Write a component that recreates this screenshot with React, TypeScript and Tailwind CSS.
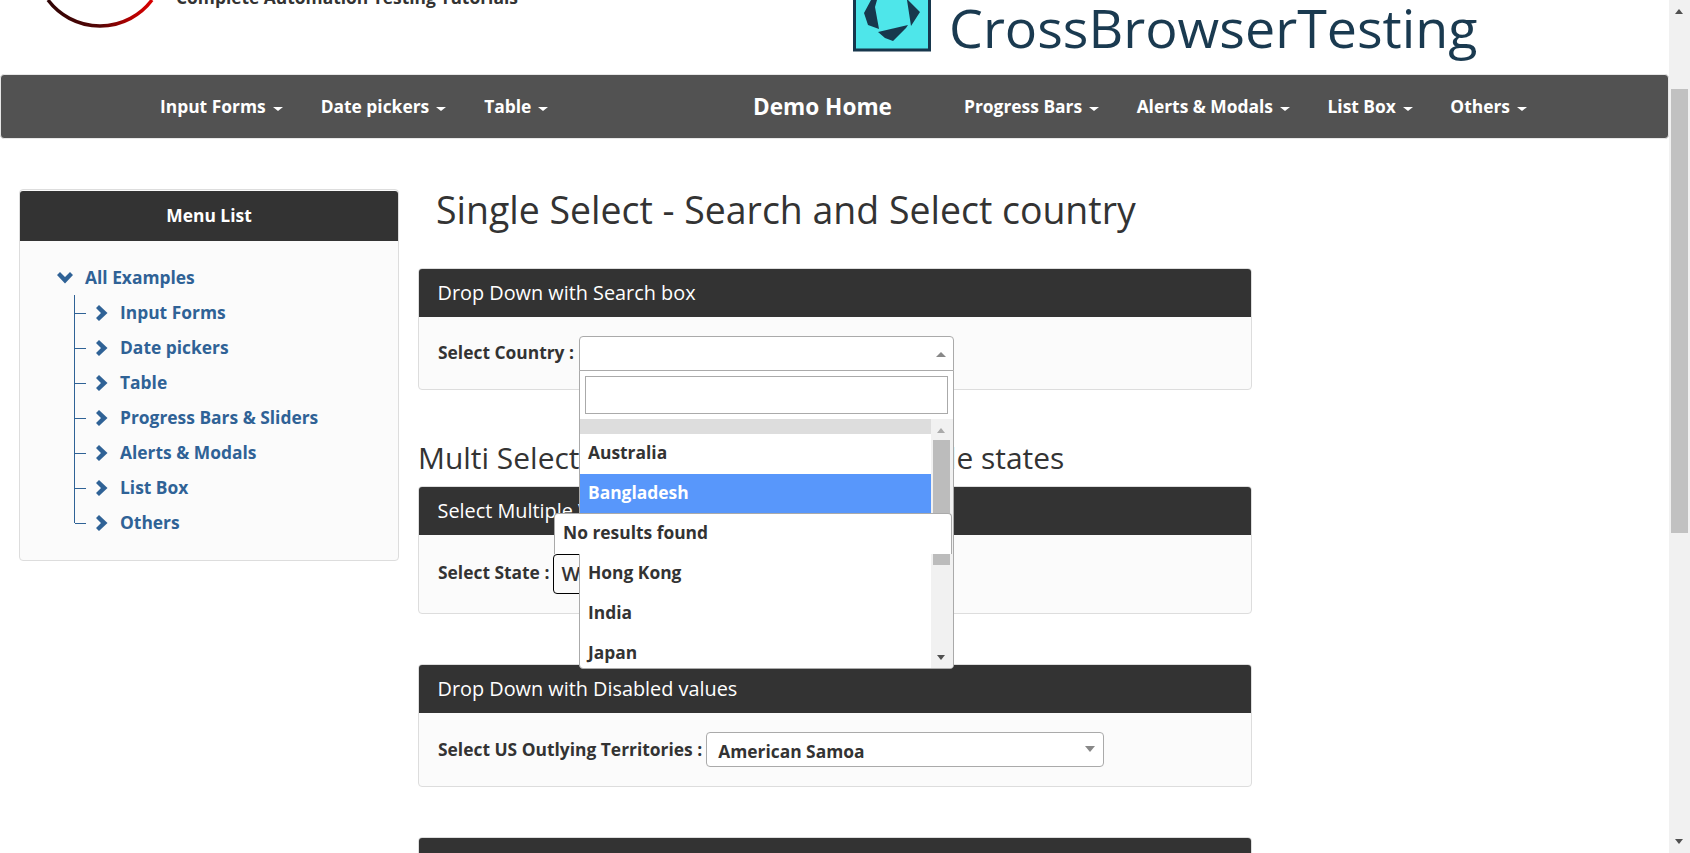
import type { ReactNode } from "react";

const leftNav = ["Input Forms", "Date pickers", "Table"];
const rightNav = ["Progress Bars", "Alerts & Modals", "List Box", "Others"];
const menuItems = ["Input Forms", "Date pickers", "Table", "Progress Bars & Sliders", "Alerts & Modals", "List Box", "Others"];
const countries = ["Australia", "Bangladesh", "China", "Hong Kong", "India", "Japan"];

const Caret = () => <span className="ml-[7px] inline-block h-0 w-0 border-x-[5px] border-t-[4px] border-x-transparent border-t-white align-middle" />;

const NavItem = ({ label }: { label: string }) => (
  <span className="whitespace-nowrap text-[17.4px] font-bold text-white">
    {label}
    <Caret />
  </span>
);

const Panel = ({ title, className, children }: { title: string; className?: string; children?: ReactNode }) => (
  <div className={`rounded border border-[#ddd] bg-[#fbfbfb] ${className ?? ""}`}>
    <div className="flex h-[48px] items-center rounded-t-[3px] bg-[#333] px-[18.5px] text-[19.85px] text-white">{title}</div>
    {children}
  </div>
);

// glyphicon style chevrons from the tree menu
const TreeRight = () => (
  <svg width="12" height="16" viewBox="0 0 12 16" className="mr-[12px] shrink-0" fill="#2f6296">
    <path d="M0 3 L3 0 L11.5 8 L3 16 L0 13 L5 8 Z" />
  </svg>
);

const TreeDown = () => (
  <svg width="16" height="12" viewBox="0 0 16 12" className="mr-[12px] shrink-0" fill="#2f6296">
    <path d="M0 3 L3 0 L8 5 L13 0 L16 3 L8 11.5 Z" />
  </svg>
);

export default function App() {
  return (
    <div className="relative h-[853px] overflow-hidden bg-white font-['Open_Sans',sans-serif] text-[#333]">
      <div className="mr-[21px]">
        {/* logos */}
        <div className="flex h-[74px]">
          <div className="flex w-[853px]">
            <svg width="163" height="30" viewBox="0 0 163 30" className="shrink-0">
              <defs>
                <linearGradient id="ring" x1="0" x2="1" y1="0" y2="0">
                  <stop offset="0" stopColor="#300404" />
                  <stop offset="0.5" stopColor="#550505" />
                  <stop offset="0.75" stopColor="#a80000" />
                  <stop offset="1" stopColor="#d80000" />
                </linearGradient>
              </defs>
              <path d="M48 0 A65 65 0 0 0 152 0" fill="none" stroke="url(#ring)" strokeWidth="3.5" />
            </svg>
            <span className="-mt-[12px] ml-[13px] h-fit whitespace-nowrap text-[17.4px] font-bold leading-[18px]">Complete Automation Testing Tutorials</span>
          </div>
          <svg width="78" height="52" viewBox="0 0 78 52" className="shrink-0">
            <rect x="1.5" y="-10" width="75" height="60" fill="#4ee6ea" stroke="#17374d" strokeWidth="3" />
            <path d="M18 0 L11 13 L15 25 L26 29 L22 7 L24 0 Z M55 0 L67 12 L58 26 L54 0 Z M25 32 L55 25 L53 28 L40 41 L32 38 Z" fill="#17374d" />
          </svg>
          <span className="-mt-[3px] ml-[18px] h-fit whitespace-nowrap text-[53.8px] leading-[60px] text-[#1a3a50]">CrossBrowserTesting</span>
        </div>

        {/* nav */}
        <div className="flex h-[65px] items-center rounded border border-[#e7e7e7] bg-[#525252]">
          <div className="ml-[159px] flex w-[593px] gap-[38px]">
            {leftNav.map((n) => <NavItem key={n} label={n} />)}
          </div>
          <span className="w-[211px] whitespace-nowrap text-[22.6px] font-bold text-white">Demo Home</span>
          <div className="flex gap-[37.5px]">
            {rightNav.map((n) => <NavItem key={n} label={n} />)}
          </div>
        </div>

        <div className="flex">
          {/* sidebar */}
          <div className="mt-[50px] ml-[19px] h-[372px] w-[380px] shrink-0 rounded border border-[#ddd] bg-[#fbfbfb]">
            <div className="mt-px flex h-[50px] items-center justify-center rounded-t-[3px] bg-[#333] pb-[2px] text-[17.4px] font-bold text-white">Menu List</div>
            <div className="pl-[37px] pt-[19px] text-[17.4px] font-bold text-[#2f6296]">
              <div className="flex h-[35px] items-center">
                <TreeDown />
                All Examples
              </div>
              <ul className="ml-[17px] border-l border-[#2f6296]">
                {menuItems.map((m, i) => (
                  <li key={m} className="relative flex h-[35px] items-center pl-[21px]">
                    <span className="absolute left-0 top-1/2 h-px w-[11px] bg-[#2f6296]" />
                    {i === menuItems.length - 1 && <span className="absolute -left-px top-[18px] h-[18px] w-px bg-[#fbfbfb]" />}
                    <TreeRight />
                    {m}
                  </li>
                ))}
              </ul>
            </div>
          </div>

          {/* main */}
          <div className="ml-[19px] w-[834px]">
            <h1 className="mt-[46px] ml-[18px] whitespace-nowrap text-[37.45px] leading-[50px] font-normal">Single Select - Search and Select country</h1>
            <Panel title="Drop Down with Search box" className="mt-[33px] h-[122px]" />
            <h2 className="mt-[48px] text-[29.95px] leading-[40px] font-normal whitespace-nowrap">Multi Select - Search and Select multiple states</h2>
            <Panel title="Select Multiple Values" className="mt-[8px] h-[128px]">
              <div className="mt-[19px] flex items-center pl-[19px]">
                <span className="-mt-[3px] text-[17.4px] font-bold">Select State :</span>
                <div className="ml-[4px] h-[40px] w-[397px] rounded border border-black pl-[7px] text-[20px] font-semibold leading-[38px]">W</div>
              </div>
            </Panel>
            <Panel title="Drop Down with Disabled values" className="mt-[50px] h-[123px]">
              <div className="mt-[19px] flex items-center pl-[19px]">
                <span className="text-[17.4px] font-bold">Select US Outlying Territories :</span>
                <div className="relative ml-[4px] flex h-[35px] w-[398px] items-center rounded border border-[#aaa] bg-white pl-[11px] pt-[4px] text-[17.4px] font-bold">
                  American Samoa
                  <span className="absolute right-[8px] top-[13px] h-0 w-0 border-x-[5px] border-t-[6px] border-x-transparent border-t-[#888]" />
                </div>
              </div>
            </Panel>
            <Panel title="" className="mt-[50px]" />
          </div>
        </div>
      </div>

      {/* open country dropdown, lies over the panels */}
      <div className="absolute left-[438px] top-[339px] text-[17.4px] font-bold leading-[27px]">Select Country :</div>
      <div className="absolute left-[579px] top-[336px] w-[375px]">
        <div className="relative h-[35px] rounded-t border border-[#aaa] bg-white">
          <span className="absolute right-[7px] top-[15px] h-0 w-0 border-x-[5px] border-b-[5px] border-x-transparent border-b-[#888]" />
        </div>
        <div className="-mt-px h-[299px] overflow-hidden rounded-b border border-[#aaa] bg-white">
          <div className="p-[5px]"><div className="h-[38px] border border-[#aaa]" /></div>
          <div className="flex">
            <div className="w-[351px] shrink-0 text-[17.4px] font-bold">
              <div className="h-[15px] bg-[#ddd]" />
              {countries.map((c) => (
                <div key={c} className={`flex h-[40px] items-center pb-[3px] pl-[8px] ${c === "Bangladesh" ? "bg-[#5897fb] text-white" : ""}`}>{c}</div>
              ))}
            </div>
            <div className="relative h-[250px] flex-1 bg-[#f1f1f1]">
              <div className="absolute left-[2px] top-[21px] h-[125px] w-[17px] bg-[#bcbcbc]" />
              <span className="absolute left-[6px] top-[9px] h-0 w-0 border-x-[4.5px] border-b-[5px] border-x-transparent border-b-[#aaa]" />
              <span className="absolute left-[6px] top-[236px] h-0 w-0 border-x-[4.5px] border-t-[5px] border-x-transparent border-t-[#505050]" />
            </div>
          </div>
        </div>
      </div>

      {/* state dropdown on top of it */}
      <div className="absolute left-[554px] top-[513px] flex h-[41px] w-[398px] items-center rounded-t border border-b-0 border-[#aaa] bg-white pb-[3px] pl-[8px] text-[17.4px] font-bold">No results found</div>

      {/* page scrollbar */}
      <div className="absolute right-0 top-0 h-[853px] w-[21px] bg-[#f1f1f1]">
        <div className="absolute left-[2px] top-[89px] h-[444px] w-[17px] bg-[#c1c1c1]" />
        <span className="absolute left-[6px] top-[9px] h-0 w-0 border-x-[4.5px] border-b-[5px] border-x-transparent border-b-[#505050]" />
        <span className="absolute left-[6px] top-[839px] h-0 w-0 border-x-[4.5px] border-t-[5px] border-x-transparent border-t-[#505050]" />
      </div>
    </div>
  );
}
